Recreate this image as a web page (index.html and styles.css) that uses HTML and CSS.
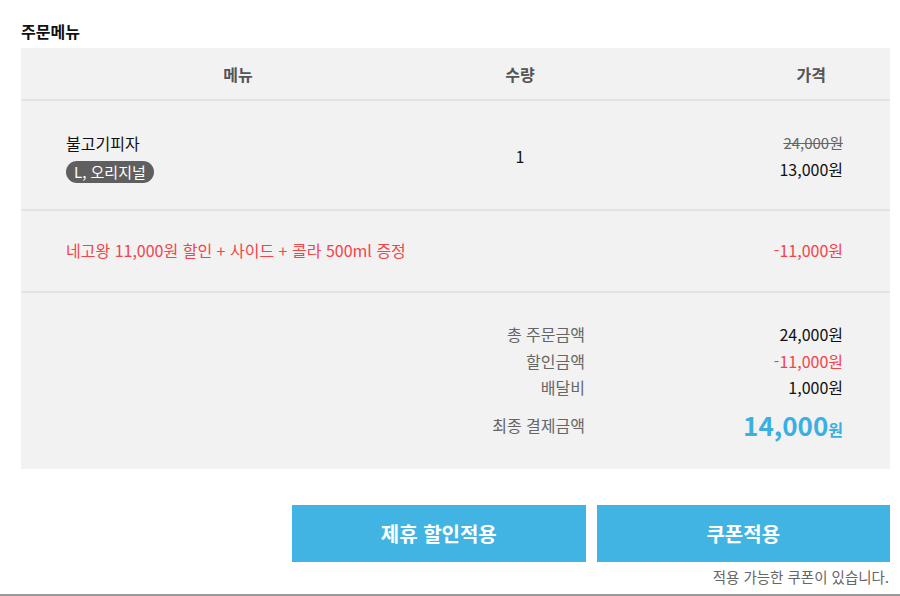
FILE: index.html
```html
<!DOCTYPE html>
<html lang="ko">
<head>
<meta charset="utf-8">
<link rel="stylesheet" href="styles.css">
</head>
<body>
<div class="page">
  <h2 class="title">주문메뉴</h2>
  <div class="table">
    <div class="row head">
      <div class="c-menu center">메뉴</div>
      <div class="c-qty">수량</div>
      <div class="c-price head-price">가격</div>
    </div>
    <div class="row item">
      <div class="c-menu">
        <div class="name">불고기피자</div>
        <span class="badge">L, 오리지널</span>
      </div>
      <div class="c-qty qty">1</div>
      <div class="c-price">
        <div class="old">24,000원</div>
        <div class="now">13,000원</div>
      </div>
    </div>
    <div class="row disc">
      <div class="c-menu red">네고왕 11,000원 할인 + 사이드 + 콜라 500ml 증정</div>
      <div class="c-qty"></div>
      <div class="c-price red">-11,000원</div>
    </div>
    <div class="summary">
      <div class="s-label">총 주문금액</div><div class="s-val">24,000원</div>
      <div class="s-label">할인금액</div><div class="s-val s-red">-11,000원</div>
      <div class="s-label">배달비</div><div class="s-val">1,000원</div>
      <div class="s-label final-l">최종 결제금액</div><div class="s-val final"><span class="big">14,000</span><span class="won">원</span></div>
    </div>
  </div>
  <div class="buttons">
    <button class="btn">제휴 할인적용</button>
    <button class="btn">쿠폰적용</button>
  </div>
  <p class="note">적용 가능한 쿠폰이 있습니다.</p>
</div>
<div class="bottom-line"></div>
</body>
</html>
```

FILE: styles.css
```css
* { box-sizing: border-box; }
html, body { margin: 0; padding: 0; background: #fff; }
body {
  font-family: "Noto Sans CJK KR", "Noto Sans", sans-serif;
  color: #222;
  width: 900px;
  height: 596px;
  overflow: hidden;
  position: relative;
}
.page { padding: 0 10px 0 21px; }
.title {
  margin: 0;
  padding-top: 21px;
  height: 48px;
  font-size: 16px;
  font-weight: 700;
  line-height: 20px;
  color: #111;
}
.table { width: 869px; background: #f2f2f2; }
.row {
  display: grid;
  grid-template-columns: 434px 130px 1fr;
  align-items: center;
  border-bottom: 2px solid #e3e3e3;
  font-size: 16px;
}
.head { height: 53px; font-weight: 700; color: #555; }
.center { text-align: center; }
.c-menu { padding-left: 45px; }
.head .c-menu { padding-left: 0; }
.c-qty { text-align: center; }
.c-price { text-align: right; padding-right: 47px; }
.head-price { padding-right: 64px; }
.item { height: 110px; padding-top: 4px; }
.name { line-height: 22px; margin-bottom: 5px; color: #111; }
.badge {
  display: inline-block;
  background: #5f5f5f;
  color: #fff;
  font-size: 15px;
  line-height: 22px;
  height: 22px;
  padding: 0 8px;
  border-radius: 11px;
}
.qty { padding-bottom: 2px; color: #111; }
.old { text-decoration: line-through; color: #666; font-size: 15px; line-height: 24px; }
.now { line-height: 28px; color: #111; }
.disc { height: 82px; padding-bottom: 2px; }
.red { color: #f2444b; }
.summary {
  display: grid;
  grid-template-columns: 564px 1fr;
  padding: 28px 47px 21px 0;
  font-size: 16px;
}
.s-label { text-align: right; color: #666; line-height: 26.5px; }
.s-val { text-align: right; line-height: 26.5px; color: #111; }
.s-val.s-red { color: #f2444b; }
.final-l, .final { line-height: 38px; margin-top: 5px; }
.big { font-size: 26px; font-weight: 700; color: #3ab0e2; }
.won { font-size: 16px; font-weight: 700; color: #3ab0e2; }
.buttons {
  display: flex;
  gap: 11px;
  width: 598px;
  margin: 36px 0 0 271px;
}
.btn {
  flex: 1;
  height: 57px;
  border: 0;
  background: #42b4e4;
  color: #fff;
  font-family: inherit;
  font-size: 20px;
  font-weight: 700;
}
.note {
  margin: 5px 0 0;
  width: 868px;
  text-align: right;
  font-size: 14.5px;
  line-height: 20px;
  color: #666;
}
.bottom-line {
  position: absolute;
  left: 0;
  right: 0;
  bottom: 0;
  height: 2px;
  background: #9a9a9a;
}
```
